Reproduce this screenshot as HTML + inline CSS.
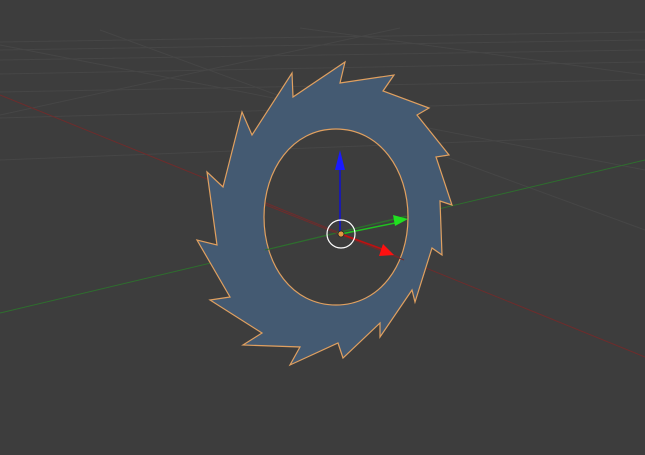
<!DOCTYPE html>
<html><head><style>html,body{margin:0;padding:0;background:#3d3d3d;overflow:hidden}</style></head>
<body>
<svg width="645" height="455" viewBox="0 0 645 455" xmlns="http://www.w3.org/2000/svg" style="display:block">
<rect width="645" height="455" fill="#3d3d3d"/>
<g stroke="#464646" stroke-width="1" fill="none">
<path d="M0 42 L645 32 M0 50 L645 40 M0 60 L645 50 M0 74 L645 62 M0 92 L645 80 M0 118 L645 100 M0 160 L645 135"/>
<path d="M100 30 L645 230 M0 45 L645 170 M300 28 L645 75 M0 115 L400 28"/>
</g>
<line x1="0" y1="95" x2="645" y2="357" stroke="#6e2c2c" stroke-width="1"/>
<line x1="0" y1="313" x2="645" y2="160" stroke="#2e6e2e" stroke-width="1"/>
<path fill-rule="evenodd" fill="#445a72" stroke="#e0a060" stroke-width="1.2" d="
M345 62 L340 83 L394 75 L383 91 L429 108 L417 115 L449 155 L436 157 L452 205 L440 201 L442 255 L432 248 L415 302 L412 290 L380 337 L380 323 L343 358 L338 343 L290 365 L300 347 L243 345 L262 333 L210 300 L230 297 L197 240 L217 245 L207 172 L223 187 L242 112 L252 135 L292 73 L293 97 Z
M336 129 C380 129 408 170 408 217 C408 265 380 305 336 305 C292 305 264 265 264 217 C264 170 292 129 336 129 Z"/>
<line x1="265" y1="250" x2="406" y2="216" stroke="#2e6e2e" stroke-width="1"/>
<line x1="266" y1="205" x2="404" y2="260" stroke="#6e2c2c" stroke-width="1"/>
<line x1="340" y1="160" x2="340" y2="232" stroke="#1010d0" stroke-width="1.5"/>
<polygon points="340,150 335,170 345,170" fill="#1a1aff"/>
<line x1="341" y1="234" x2="400" y2="222" stroke="#20c020" stroke-width="1.5"/>
<polygon points="408,219 393,215 395,226" fill="#20e020"/>
<line x1="341" y1="234" x2="385" y2="250" stroke="#c01010" stroke-width="1.5"/>
<polygon points="394,255 383,244 379,256" fill="#ff1010"/>
<circle cx="341" cy="234" r="14" fill="none" stroke="#fff" stroke-width="1.2"/>
<circle cx="341" cy="234" r="3" fill="#e09a40" stroke="#222" stroke-width="0.8"/>
</svg>
</body></html>
